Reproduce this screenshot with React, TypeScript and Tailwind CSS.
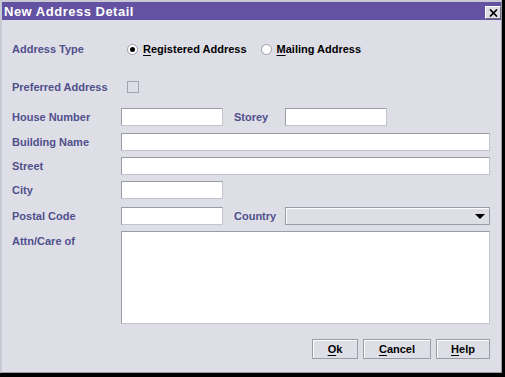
import React from "react";

const labelCls = "w-[109px] shrink-0 text-[11px] font-bold text-[#50508c] leading-[18px]";
const fieldCls = "h-[18px] bg-white border border-[#9c9ca6] border-r-[#c4c4cc] border-b-[#c4c4cc]";

const Radio: React.FC<{ checked?: boolean }> = ({ checked }) => (
  <span className="w-[11px] h-[11px] rounded-full border border-[#9c9ca6] bg-white flex items-center justify-center shrink-0">
    {checked && <span className="w-[5px] h-[5px] rounded-full bg-black" />}
  </span>
);

const Button: React.FC<{ mn: string; rest: string; w: string }> = ({ mn, rest, w }) => (
  <button
    className={`${w} h-[20px] bg-[#dedee6] border border-[#9c9ca6] shadow-[inset_1px_1px_0_#ffffff] text-[11px] font-bold text-black flex items-center justify-center`}
  >
    <span className="underline underline-offset-2">{mn}</span>
    {rest}
  </button>
);

const App: React.FC = () => {
  return (
    <div className="w-[505px] h-[377px] bg-black" style={{ fontFamily: '"Liberation Sans", Arial, sans-serif' }}>
      <div className="w-[502px] h-[373px] border-t-2 border-l-2 border-[#c9c9d3] bg-[#dedee6] flex flex-col border-r border-r-[#9c9ca6] border-b border-b-[#9c9ca6]">
        {/* title bar */}
        <div className="h-[18px] bg-[#6351a1] flex items-center justify-between pl-[2px] pr-[0px]">
          <span className="text-white text-[13px] font-bold tracking-[0.5px] leading-none">New Address Detail</span>
          <span className="w-[16px] h-[13px] mt-[3px] bg-[#dedee6] border border-[#6d6d78] border-t-white border-l-white flex items-center justify-center">
            <svg width="9" height="8" viewBox="0 0 9 8">
              <path d="M1 0.5 L8 7.5 M8 0.5 L1 7.5" stroke="black" strokeWidth="1.7" />
            </svg>
          </span>
        </div>

        <div className="flex flex-col pl-[10px]">
          {/* address type */}
          <div className="flex items-center h-[18px] mt-[20px]">
            <span className={labelCls + " w-[115px]"}>Address Type</span>
            <Radio checked />
            <span className="ml-[5px] text-[11px] font-bold text-black">
              <span className="underline underline-offset-2">R</span>egistered Address
            </span>
            <span className="ml-[14px]">
              <Radio />
            </span>
            <span className="ml-[5px] text-[11px] font-bold text-black">
              <span className="underline underline-offset-2">M</span>ailing Address
            </span>
          </div>

          {/* preferred */}
          <div className="flex items-center h-[18px] mt-[20px]">
            <span className={labelCls + " w-[115px]"}>Preferred Address</span>
            <span className="w-[12px] h-[12px] border border-[#a4a4ae] bg-[#dedee6]" />
          </div>

          {/* house / storey */}
          <div className="flex items-center h-[18px] mt-[12px]">
            <span className={labelCls}>House Number</span>
            <div className={fieldCls + " w-[102px]"} />
            <span className="ml-[11px] w-[51px] text-[11px] font-bold text-[#50508c]">Storey</span>
            <div className={fieldCls + " w-[102px]"} />
          </div>

          <div className="flex items-center h-[18px] mt-[7px]">
            <span className={labelCls}>Building Name</span>
            <div className={fieldCls + " w-[369px]"} />
          </div>

          <div className="flex items-center h-[18px] mt-[6px]">
            <span className={labelCls}>Street</span>
            <div className={fieldCls + " w-[369px]"} />
          </div>

          <div className="flex items-center h-[18px] mt-[6px]">
            <span className={labelCls}>City</span>
            <div className={fieldCls + " w-[102px]"} />
          </div>

          <div className="flex items-center h-[18px] mt-[8px]">
            <span className={labelCls}>Postal Code</span>
            <div className={fieldCls + " w-[102px]"} />
            <span className="ml-[11px] w-[51px] text-[11px] font-bold text-[#50508c]">Country</span>
            <div className="w-[205px] h-[18px] bg-[#dedee6] border border-[#9c9ca6] shadow-[inset_1px_1px_0_#ffffff] flex items-center justify-end pr-[4px]">
              <svg width="10" height="5" viewBox="0 0 10 5">
                <path d="M0 0 H10 L5 5 Z" fill="black" />
              </svg>
            </div>
          </div>

          <div className="flex items-start mt-[6px]">
            <span className={labelCls + " leading-[14px] mt-[1px]"}>Attn/Care of</span>
            <div className="w-[369px] h-[93px] bg-white border border-[#9c9ca6] border-r-[#c4c4cc] border-b-[#c4c4cc]" />
          </div>

          {/* buttons */}
          <div className="flex justify-end gap-[5px] mt-[15px] w-[478px]">
            <Button mn="O" rest="k" w="w-[46px]" />
            <Button mn="C" rest="ancel" w="w-[68px]" />
            <Button mn="H" rest="elp" w="w-[54px]" />
          </div>
        </div>
      </div>
    </div>
  );
};

export default App;
